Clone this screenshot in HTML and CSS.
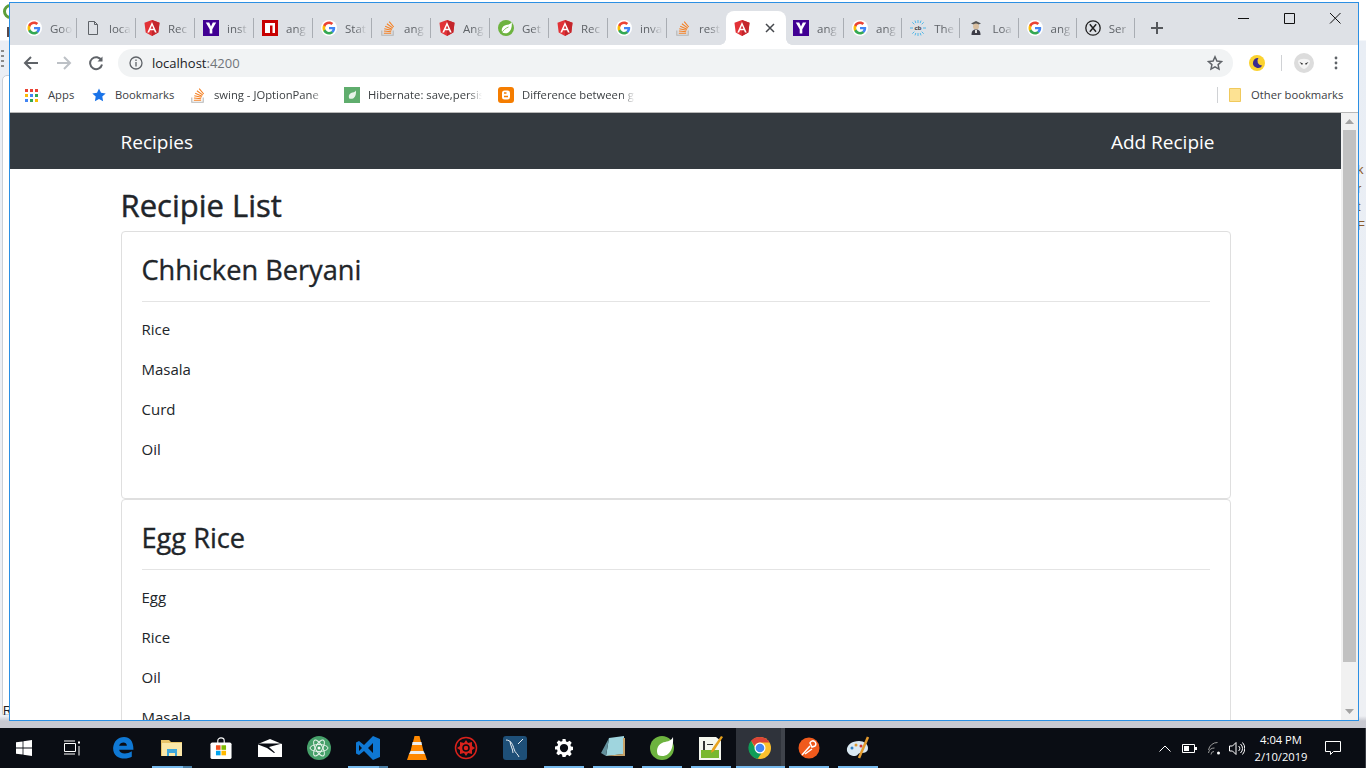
FILE: index.html
```html
<!DOCTYPE html>
<html lang="en">
<head>
<meta charset="utf-8">
<title>localhost:4200</title>
<link rel="stylesheet" href="styles.css">
</head>
<body>
<svg class="defs" width="0" height="0" aria-hidden="true">
  <symbol id="g" viewBox="0 0 16 16"><circle cx="8" cy="8" r="8" fill="#fff"/><path d="M14.2 8.2c0-.5 0-.9-.1-1.300H8v2.400h3.500c-.2.800-.6 1.400-1.300 1.900v1.500h2.100c1.200-1.100 1.900-2.700 1.900-4.500z" fill="#4285f4"/><path d="M8 14.400c1.700 0 3.200-.6 4.300-1.500l-2.100-1.600c-.6.400-1.300.6-2.200.6-1.700 0-3.100-1.100-3.600-2.600H2.200v1.600C3.300 13 5.500 14.400 8 14.400z" fill="#34a853"/><path d="M4.400 9.300c-.3-.8-.3-1.800 0-2.600V5.100H2.200c-.9 1.800-.9 4 0 5.800z" fill="#fbbc05"/><path d="M8 4.100c.9 0 1.800.3 2.400.9l1.900-1.900C11.200 2.200 9.700 1.600 8 1.600 5.500 1.600 3.300 3 2.200 5.100l2.200 1.600C4.900 5.200 6.300 4.100 8 4.100z" fill="#ea4335"/></symbol>
  <symbol id="doc" viewBox="0 0 16 16"><path d="M3.500 1.500h6l3 3v10h-9z M9.500 1.500v3h3" fill="none" stroke="#5f6368"/></symbol>
  <symbol id="ng" viewBox="0 0 16 16"><path d="M8 0 .5 2.700l1.200 9.900L8 16l6.300-3.400 1.200-9.900z" fill="#e23237"/><path d="M8 0v16l6.300-3.400 1.200-9.900z" fill="#c4262c"/><path d="M8 2 3.300 12.500h1.800l.9-2.300h4l.9 2.300h1.800zm1.400 6.700H6.600L8 5.400z" fill="#fff"/></symbol>
  <symbol id="yh" viewBox="0 0 16 16"><path d="M0 0h16v16H0z" fill="#410093"/><path d="M2.800 2.500h3.400L8 6.500l1.800-4h3.400L9.300 9.300v4.200H6.700V9.300z" fill="#fff"/></symbol>
  <symbol id="npm" viewBox="0 0 16 16"><path d="M0 0h16v16H0z" fill="#c80000"/><path d="M3 3h10v10h-2.500V5.500H8V13H3z" fill="#fff"/></symbol>
  <symbol id="so" viewBox="0 0 16 16"><path d="M1.800 10.500v4.700h11.400v-4.700" fill="none" stroke="#b5b5b5" stroke-width="1.100"/><path d="M3.800 13.200h7.400M3.900 11l7.300.7M4.300 8.700l7.200 1.600M5.200 6.200l6.900 3M6.900 3.800l6 4.300M9.200 1.600l4.500 5.400" fill="none" stroke="#f48024" stroke-width="1.100"/></symbol>
  <symbol id="sp" viewBox="0 0 16 16"><circle cx="8" cy="8" r="8" fill="#6db33f"/><path d="M13.800 2c-1.500 3-4.300 2.300-7 3.500-3 1.300-3.700 4.500-2.500 7 1.500 1 4 1.200 6 0 3-1.800 3.800-6 3.500-10.500z" fill="#fff"/><path d="M3.500 13.500C5 10 8 8 10.500 7" fill="none" stroke="#6db33f" stroke-width=".8"/></symbol>
  <symbol id="cb" viewBox="0 0 16 16"><g stroke="#52b8e8" stroke-width="1"><path d="M8 0v3M8 13v3M0 8h3M13 8h3M2.300 2.300l2 2M11.700 11.700l2 2M2.300 13.700l2-2M11.700 4.300l2-2M5 .6l.8 2.400M11 .6l-.8 2.400M5 15.400l.8-2.400M11 15.400l-.8-2.400"/></g><text x="8" y="10" class="cbt">cb</text></symbol>
  <symbol id="ld" viewBox="0 0 16 16"><path d="M3 3.500 8 1l5 2.500L8 5.500z" fill="#555"/><circle cx="8" cy="6.500" r="3" fill="#d9bfa0"/><path d="M3.500 15c0-4 1.500-5.500 4.500-5.500s4.500 1.500 4.500 5.500z" fill="#3c3c46"/><path d="M7 10h2v3H7z" fill="#ddd"/></symbol>
  <symbol id="xc" viewBox="0 0 16 16"><circle cx="8" cy="8" r="7.200" fill="none" stroke="#222" stroke-width="1.300"/><path d="M4.800 4.300 11 11.700M11.200 4.300 4.800 11.700" stroke="#222" stroke-width="1.500"/></symbol>
</svg>

<main class="desktop">
  <span class="peek peek-ball"></span>
  <span class="peek peek-bar"></span>
  <span class="peek peek-dots"></span>
  <span class="peek peek-box"></span>
  <span class="peek peek-r">R</span>
  <div class="peek peek-right"><span>k</span><span>r</span><span>t</span><span>F</span></div>

  <section class="window">
    <header class="tabstrip">
      <div class="tabs">
        <div class="tab"><svg class="fav"><use href="#g"/></svg><span class="tab-t">Goo</span></div>
        <div class="tab"><svg class="fav"><use href="#doc"/></svg><span class="tab-t">loca</span></div>
        <div class="tab"><svg class="fav"><use href="#ng"/></svg><span class="tab-t">Rec</span></div>
        <div class="tab"><svg class="fav"><use href="#yh"/></svg><span class="tab-t">inst</span></div>
        <div class="tab"><svg class="fav"><use href="#npm"/></svg><span class="tab-t">ang</span></div>
        <div class="tab"><svg class="fav"><use href="#g"/></svg><span class="tab-t">Stat</span></div>
        <div class="tab"><svg class="fav"><use href="#so"/></svg><span class="tab-t">ang</span></div>
        <div class="tab"><svg class="fav"><use href="#ng"/></svg><span class="tab-t">Ang</span></div>
        <div class="tab"><svg class="fav"><use href="#sp"/></svg><span class="tab-t">Get</span></div>
        <div class="tab"><svg class="fav"><use href="#ng"/></svg><span class="tab-t">Rec</span></div>
        <div class="tab"><svg class="fav"><use href="#g"/></svg><span class="tab-t">inva</span></div>
        <div class="tab tab-pre"><svg class="fav"><use href="#so"/></svg><span class="tab-t">rest</span></div>
        <div class="tab tab-active"><svg class="fav"><use href="#ng"/></svg>
          <svg class="tab-x" viewBox="0 0 10 10"><path d="M1 1l8 8M9 1l-8 8"/></svg></div>
        <div class="tab"><svg class="fav"><use href="#yh"/></svg><span class="tab-t">ang</span></div>
        <div class="tab"><svg class="fav"><use href="#g"/></svg><span class="tab-t">ang</span></div>
        <div class="tab"><svg class="fav"><use href="#cb"/></svg><span class="tab-t">The</span></div>
        <div class="tab"><svg class="fav"><use href="#ld"/></svg><span class="tab-t">Loa</span></div>
        <div class="tab"><svg class="fav"><use href="#g"/></svg><span class="tab-t">ang</span></div>
        <div class="tab"><svg class="fav"><use href="#xc"/></svg><span class="tab-t">Ser</span></div>
      </div>
      <svg class="newtab" viewBox="0 0 12 12"><path d="M6 0v12M0 6h12"/></svg>
      <div class="winctl">
        <svg class="wc" viewBox="0 0 46 30"><path d="M18 15.500h11"/></svg>
        <svg class="wc" viewBox="0 0 46 30"><path d="M18.500 10.500h10v10h-10z"/></svg>
        <svg class="wc" viewBox="0 0 46 30"><path d="M18 10l10.500 10.500M28.500 10 18 20.500"/></svg>
      </div>
    </header>

    <nav class="toolbar">
      <svg class="tb tb-back" viewBox="0 0 16 16"><path d="M15 8H2.500M8 2 2 8l6 6"/></svg>
      <svg class="tb tb-fwd" viewBox="0 0 16 16"><path d="M1 8h12.500M8 2l6 6-6 6"/></svg>
      <svg class="tb tb-rel" viewBox="0 0 16 16"><path d="M13.500 5.500A6 6 0 1 0 14 9.500"/><path class="fill" d="M14.500 1.500v5h-5z"/></svg>
      <div class="omni">
        <svg class="info" viewBox="0 0 14 14"><circle cx="7" cy="7" r="6"/><path d="M7 6v4.500M7 3.500v1.500"/></svg>
        <span class="url">localhost<span class="port">:4200</span></span>
        <svg class="ostar" viewBox="0 0 16 16"><path d="M8 1.800l1.900 4.200 4.600.5-3.400 3.100.9 4.500-4-2.300-4 2.300.9-4.500L1.500 6.500 6.100 6z"/></svg>
      </div>
      <svg class="ext" viewBox="0 0 16 16"><circle cx="8" cy="8" r="8" fill="#fbd22f"/><path d="M9.500 3a5 5 0 1 0 3.800 7.500A4.500 4.500 0 0 1 9.500 3z" fill="#3b2a90"/></svg>
      <span class="tb-sep"></span>
      <svg class="avatar" viewBox="0 0 20 20"><circle cx="10" cy="10" r="10" fill="#dcdcdc"/><path d="M4 8c2-3 10-3 12 0 0 4-4 8-6 8s-6-4-6-8z" fill="#f4f4f4"/><path d="M5.500 9l3.500 1.500-1 1.500zM14.500 9 11 10.500l1 1.500z" fill="#333"/></svg>
      <svg class="dots" viewBox="0 0 4 14"><circle cx="2" cy="2" r="1.400"/><circle cx="2" cy="7" r="1.400"/><circle cx="2" cy="12" r="1.400"/></svg>
    </nav>

    <div class="bookmarks">
      <svg class="bm-apps" viewBox="0 0 13 13"><g><path fill="#ea4335" d="M0 0h3v3H0zM5 0h3v3H5zM10 0h3v3h-3z"/><path fill="#fbbc05" d="M0 5h3v3H0z"/><path fill="#4285f4" d="M5 5h3v3H5zM0 10h3v3H0z"/><path fill="#34a853" d="M10 5h3v3h-3zM5 10h3v3H5z"/><path fill="#fbbc05" d="M10 10h3v3h-3z"/></g></svg>
      <span class="bm bm-a">Apps</span>
      <svg class="bm-star" viewBox="0 0 14 14"><path fill="#1a73e8" d="M7 .5l2 4.300 4.700.6-3.400 3.200.8 4.700L7 11l-4.100 2.300.8-4.700L.3 5.400 5 4.800z"/></svg>
      <span class="bm bm-b">Bookmarks</span>
      <svg class="fav bm-so"><use href="#so"/></svg>
      <span class="bm bm-f bm-c">swing - JOptionPane</span>
      <svg class="fav bm-leaf" viewBox="0 0 16 16"><path d="M0 0h16v16H0z" fill="#5fad6d"/><path d="M12 3.500c-1 2-3 1.500-5 2.500-2.500 1.300-2.500 3.700-1.800 5.500 1 .5 3 .5 4.300-.3 2.200-1.500 2.700-4.700 2.500-7.700z" fill="#e6f3e8"/></svg>
      <span class="bm bm-f bm-d">Hibernate: save,persis</span>
      <svg class="fav bm-blog" viewBox="0 0 16 16"><rect width="16" height="16" rx="3" fill="#f57d00"/><rect x="4" y="3.500" width="8" height="9" rx="2.500" fill="#fff"/><path d="M6 6h2.500M6 9.500h4" stroke="#f57d00" stroke-width="1.300"/></svg>
      <span class="bm bm-f bm-e">Difference between g</span>
      <span class="bm-sep"></span>
      <svg class="bm-folder" viewBox="0 0 12 14"><path d="M.5.500h11v13H.5z" fill="#fde293" stroke="#f0c95c"/></svg>
      <span class="bm bm-o">Other bookmarks</span>
    </div>

    <div class="viewport">
      <div class="page">
        <div class="navbar">
          <div class="container nav-inner">
            <a class="brand">Recipies</a>
            <a class="nav-link">Add Recipie</a>
          </div>
        </div>
        <div class="container">
          <h2 class="heading">Recipie List</h2>
          <article class="card">
            <h3 class="card-title">Chhicken Beryani</h3>
            <hr class="rule">
            <p>Rice</p><p>Masala</p><p>Curd</p><p>Oil</p>
          </article>
          <article class="card">
            <h3 class="card-title">Egg Rice</h3>
            <hr class="rule">
            <p>Egg</p><p>Rice</p><p>Oil</p><p>Masala</p>
          </article>
        </div>
      </div>
      <div class="scrollbar">
        <svg class="sb-arrow" viewBox="0 0 9 5"><path d="M4.500 0 9 5H0z"/></svg>
        <div class="sb-track"><div class="sb-thumb"></div></div>
        <svg class="sb-arrow" viewBox="0 0 9 5"><path d="M0 0h9L4.500 5z"/></svg>
      </div>
    </div>
  </section>
</main>

<footer class="taskbar">
  <div class="ti ti-s"><svg class="ic" viewBox="0 0 16 16"><path fill="#fff" d="M0 2.300 6.600 1.400v6.200H0zM7.400 1.300 16 0v7.600H7.400zM0 8.400h6.600v6.200L0 13.700zM7.400 8.400H16V16l-8.600-1.300z"/></svg></div>
  <div class="ti ti-s ti-view"><svg class="ic" viewBox="0 0 16 16"><path fill="none" stroke="#fff" d="M.5 3.500h11v8H.5zM0 1h11M0 14h11"/><path stroke="#fff" stroke-width="2" d="M14 2.500h2"/><path stroke="#fff" d="M15 6v9.500"/></svg></div>
  <div class="ti"><svg class="ic ic-l" viewBox="0 0 20 20"><path fill="#0f78d4" d="M1 10C1.500 4 5.500 0 11 0c5 0 8.500 3.500 8.500 11.500H6.500c.3 3.500 6 5 11.500 1.500v5c-5 2.800-17 3-17-8zm5.500-2h7C13.500 4 7.500 4 6.500 8z"/></svg></div>
  <div class="ti on stack"><svg class="ic ic-l" viewBox="0 0 22 20"><path fill="#e9c46a" d="M0 2h8l2 2h11v14H0z"/><path fill="#fbe7a8" d="M1 5h20v13H1z"/><path fill="#3fa7dc" d="M6 11h10v7h-2v-3H8v3H6z"/></svg></div>
  <div class="ti"><svg class="ic ic-l" viewBox="0 0 23 24"><path fill="none" stroke="#fff" stroke-width="1.200" d="M8 7V4c0-4 7-4 7 0v3"/><rect y="6" width="23" height="18" rx="2" fill="#fff"/><path fill="#f25022" d="M6 9h5v5H6z"/><path fill="#7fba00" d="M12 9h5v5h-5z"/><path fill="#00a4ef" d="M6 15h5v5H6z"/><path fill="#ffb900" d="M12 15h5v5h-5z"/></svg></div>
  <div class="ti"><svg class="ic ic-x" viewBox="0 0 24 18"><path fill="#fff" d="M0 5 12 0l12 5v13H0z"/><path fill="#0a0d14" d="M0 4.500h24L11 8l6 5.500-1 .5-7-5-9-3.500z"/></svg></div>
  <div class="ti"><svg class="ic ic-x" viewBox="0 0 24 24"><circle cx="12" cy="12" r="12" fill="#46a06a"/><g fill="none" stroke="#e6f3ea"><ellipse cx="12" cy="12" rx="9" ry="3.500"/><ellipse cx="12" cy="12" rx="9" ry="3.500" transform="rotate(60 12 12)"/><ellipse cx="12" cy="12" rx="9" ry="3.500" transform="rotate(120 12 12)"/></g><circle cx="12" cy="12" r="1.500" fill="#fff"/></svg></div>
  <div class="ti on stack"><svg class="ic ic-x" viewBox="0 0 24 24"><path fill="#0f78d4" d="M17 0l7 3v18l-7 3-9-9-5 4-3-1.500v-11L3 5l5 4zM17 7l-5 5 5 5zM3 9v6l3-3z"/></svg></div>
  <div class="ti"><svg class="ic ic-x" viewBox="0 0 20 24"><path fill="#ff8800" d="M7.500 0h5l1.500 6h-8zM5 9h10l1.500 6h-13zM0 24l2-6h16l2 6z"/><path fill="#eee" d="M5.500 6h9L15 9H5zM3.500 15h13l1.500 3H2z"/></svg></div>
  <div class="ti"><svg class="ic ic-x" viewBox="0 0 24 24"><circle cx="12" cy="12" r="10.500" fill="none" stroke="#d9221c" stroke-width="1.500"/><path fill="#d9221c" d="M12 4l2 3 4-1 0 4 3 2-3 2 0 4-4-1-2 3-2-3-4 1 0-4-3-2 3-2 0-4 4 1z"/><circle cx="12" cy="12" r="3" fill="none" stroke="#0a0d14" stroke-width="1.500"/></svg></div>
  <div class="ti"><svg class="ic ic-x" viewBox="0 0 24 24"><rect width="24" height="24" rx="3" fill="#1e4f78"/><path fill="none" stroke="#e8eef3" d="M3 4c5 0 7 5 8 9s4 5 5 8M7 5c0 4 3 8 3 12M15 8l5-5"/></svg></div>
  <div class="ti on"><svg class="ic ic-g" viewBox="0 0 24 24"><path fill="#fff" d="M10 0h4l.7 3.300 2 .8 2.800-1.800 2.800 2.800-1.800 2.800.8 2 3.300.7v4l-3.300.7-.8 2 1.800 2.800-2.800 2.800-2.800-1.800-2 .8L14 24h-4l-.7-3.300-2-.8-2.800 1.800-2.800-2.800 1.800-2.800-.8-2L0 14v-4l3.300-.7.8-2L2.300 4.500l2.800-2.800 2.800 1.800 2-.8zm2 6.500a5.500 5.500 0 1 0 0 11 5.500 5.500 0 0 0 0-11z"/></svg></div>
  <div class="ti on"><svg class="ic ic-x" viewBox="0 0 24 24"><path fill="#9fd5de" d="M8 2l15-2v18L5 20z"/><path fill="#63909c" d="M8 2 0 17l5 3z"/><path fill="#c8a36a" d="M22 2h2v18H5l17-2z"/></svg></div>
  <div class="ti on"><svg class="ic ic-x" viewBox="0 0 24 24"><circle cx="12" cy="12" r="12" fill="#6db33f"/><path fill="#fff" d="M23 1c-2 5-7 4-11 6-5 2.500-6 8-4 12 2.500 1.500 7 1.500 10-1 4.500-3.500 5.500-11 5-17z"/></svg></div>
  <div class="ti on"><svg class="ic ic-x" viewBox="0 0 24 24"><path fill="#f4f6ee" d="M0 1h17l5 4v19H0z"/><path fill="#79b82e" d="M2 14h18v8H2z"/><path fill="#333" d="M4 5h2v9H4zM8 8h6v1H8z"/><path fill="#e8a21c" d="M22 0l2 1-9 14-3 2 1-4z"/></svg></div>
  <div class="ti ti-chrome on"><svg class="ic ic-x" viewBox="0 0 24 24"><circle cx="12" cy="12" r="11" fill="#fbc02d"/><path fill="#db4437" d="M12 1a11 11 0 0 1 9.500 5.500H12a5.500 5.500 0 0 0-5.200 3.700L3 4.800A11 11 0 0 1 12 1z"/><path fill="#0f9d58" d="M3 4.800l5 8.700a5 5 0 0 0 5.500 3.800L9.600 22.700A11 11 0 0 1 3 4.800z"/><circle cx="12" cy="12" r="5.500" fill="#fff"/><circle cx="12" cy="12" r="4.300" fill="#4285f4"/></svg></div>
  <div class="ti on"><svg class="ic ic-x" viewBox="0 0 24 24"><circle cx="12" cy="12" r="10.500" fill="#f05a1c"/><path fill="none" stroke="#fff" stroke-width="1.500" d="M5 19l8-9M8 18l7-5M13 7a3 3 0 1 1 5 3l-3 1z"/></svg></div>
  <div class="ti on"><svg class="ic ic-x" viewBox="0 0 24 24"><path fill="#d9e8f2" d="M1 15C0 9 6 5 13 5c5 0 9 3 9 7 0 5-5 5-8 5-2 0-2 3-5 3-4 0-7-2-8-5z"/><circle cx="6" cy="12" r="1.500" fill="#2f7fc2"/><circle cx="10" cy="9" r="1.500" fill="#d93"/><circle cx="15" cy="10" r="1.500" fill="#c33"/><path stroke="#e39a2d" stroke-width="2.500" d="M13 22 22 1"/></svg></div>
  <div class="tray">
    <svg class="tr tr-chev" viewBox="0 0 12 7"><path d="M.5 6.500 6 1l5.500 5.500"/></svg>
    <svg class="tr tr-bat" viewBox="0 0 15 9"><path d="M.5.500h12v8H.5z"/><path class="fill" d="M2 2h5v5H2zM13 3h2v3h-2z"/></svg>
    <svg class="tr tr-wifi" viewBox="0 0 14 13"><path class="dim" d="M.5 8a9 9 0 0 1 9-7.500M.5 11a6 6 0 0 1 6-5M3 12.500a3 3 0 0 1 3-3"/><circle class="fill" cx="10.500" cy="11" r="1.500"/></svg>
    <svg class="tr tr-vol" viewBox="0 0 16 13"><path d="M.5 4h3l3.500-3.500v12L3.500 9h-3zM9.500 4a3 3 0 0 1 0 5M11.500 2a6 6 0 0 1 0 9M13.500.5a9 9 0 0 1 0 12"/></svg>
    <div class="clock"><span>4:04 PM</span><span>2/10/2019</span></div>
    <svg class="tr tr-note" viewBox="0 0 16 15"><path d="M.5.500h15v10H8.500l-3 3v-3h-5z"/></svg>
  </div>
</footer>
</body>
</html>
```

FILE: styles.css
```css
* { box-sizing: border-box; }
html, body { margin: 0; height: 100%; }
body {
  width: 1366px; height: 768px; overflow: hidden;
  display: flex; flex-direction: column;
  font-family: "Open Sans", "Noto Sans", "Liberation Sans", sans-serif;
  background: #fff;
}
.defs { position: absolute; }
.cbt { font: bold 6px "Liberation Sans", sans-serif; text-anchor: middle; fill: #333; }

/* desktop behind the window */
.desktop {
  flex: 1; position: relative; overflow: hidden;
  background: linear-gradient(to bottom, #fff 0, #fff 40px, #e9eef5 41px, #eef0f4 716px, #c8c9d1 721px);
}
.peek { position: absolute; }
.peek-ball { left: 3px; top: 4px; width: 15px; height: 15px; border: 3px solid #5f9e3a; border-radius: 50%; }
.peek-bar { left: 7px; top: 27px; width: 2px; height: 10px; background: #5a4a4a; }
.peek-dots {
  left: 1px; top: 50px; width: 3px; height: 18px;
  background: repeating-linear-gradient(to bottom, #8a8a8a 0, #8a8a8a 2px, transparent 2px, transparent 5px);
}
.peek-box { left: 2px; top: 75px; width: 20px; height: 640px; background: #fff; border: 1px solid #c9ced6; border-radius: 5px 0 0 0; }
.peek-r { left: 3px; top: 704px; font: 12px "Liberation Sans", sans-serif; color: #222; }
.peek-right {
  left: 1357px; top: 161px; width: 9px; overflow: hidden;
  display: flex; flex-direction: column;
  font: 13px/18.700px "Liberation Sans", sans-serif; color: #8a5a2b;
}

.window {
  position: absolute; left: 9px; top: 2px; width: 1350px; height: 719px;
  border: 1px solid #2b8fe3; background: #fff;
  display: flex; flex-direction: column; overflow: hidden;
}

/* tab strip */
.tabstrip { height: 42px; flex: none; background: #dee1e6; display: flex; align-items: flex-end; padding-left: 8px; position: relative; }
.tabs { display: flex; height: 34px; }
.tab {
  width: 59px; height: 34px; flex: none; position: relative;
  display: flex; align-items: center; padding: 0 0 0 8px;
}
.tab:nth-child(n+15) { width: 58.200px; }
.tab::after { content: ""; position: absolute; right: 0; top: 7px; height: 20px; width: 1px; background: #a9adb3; }
.tab-pre::after { display: none; }
.tab-active { background: #fff; border-radius: 8px 8px 0 0; width: 60px; margin-right: -1px; z-index: 1; }
.tab-active::before, .tab-active::after {
  content: ""; position: absolute; top: auto; bottom: 0; width: 6px; height: 6px;
}
.tab-active::before { left: -6px; right: auto; background: radial-gradient(circle at 0 0, #dee1e6 5.500px, #fff 6px); }
.tab-active::after { right: -6px; background: radial-gradient(circle at 100% 0, #dee1e6 5.500px, #fff 6px); }
.fav { width: 16px; height: 16px; flex: none; }
.tab-t {
  margin-left: 8px; white-space: nowrap;
  font-size: 11.500px; color: #5f6368; flex: none;
  -webkit-mask-image: linear-gradient(to right, #000 10px, rgba(0,0,0,.15) 20px);
  mask-image: linear-gradient(to right, #000 10px, rgba(0,0,0,.15) 20px);
}
.tab-x { width: 10px; height: 10px; margin-left: 15px; fill: none; stroke: #45484d; stroke-width: 1.500; flex: none; }
.newtab { width: 12px; height: 12px; margin: 0 0 11px 16px; fill: none; stroke: #55585c; stroke-width: 2; flex: none; }
.winctl { margin-left: auto; align-self: flex-start; display: flex; margin-top: 0; }
.wc { width: 46px; height: 30px; fill: none; stroke: #111; stroke-width: 1; }

/* toolbar */
.toolbar { height: 36px; flex: none; display: flex; align-items: center; background: #fff; }
.tb { width: 16px; height: 16px; fill: none; stroke: #5f6368; stroke-width: 2; flex: none; }
.tb-back { margin-left: 13px; }
.tb-fwd { margin-left: 17px; stroke: #bdc1c6; }
.tb-rel { margin-left: 16px; }
.tb-rel .fill { fill: #5f6368; stroke: none; }
.omni {
  margin-left: 14px; width: 1115px; height: 28px; border-radius: 14px; background: #f1f3f4;
  display: flex; align-items: center; padding-left: 11px; flex: none;
}
.info { width: 14px; height: 14px; fill: none; stroke: #5f6368; stroke-width: 1.300; flex: none; }
.url { margin-left: 9px; font-size: 13px; color: #202124; }
.port { color: #70757a; }
.ostar { width: 16px; height: 16px; margin-left: auto; margin-right: 10px; fill: none; stroke: #5f6368; stroke-width: 1.500; }
.ext { width: 16px; height: 16px; margin-left: 16px; flex: none; }
.tb-sep { width: 1px; height: 16px; background: #d0d2d5; margin-left: 16px; flex: none; }
.avatar { width: 20px; height: 20px; margin-left: 12px; flex: none; }
.dots { width: 4px; height: 14px; margin-left: 20px; fill: #5f6368; flex: none; }

/* bookmarks */
.bookmarks {
  height: 32px; flex: none; display: flex; align-items: center; background: #fff;
  border-bottom: 1px solid #b8b8b8; padding-bottom: 3px; white-space: nowrap;
}
.bm { font-size: 11.250px; color: #3c4043; flex: none; margin-bottom: 2px; }
.bm-f {
  -webkit-mask-image: linear-gradient(to right, #000 88%, transparent 100%);
  mask-image: linear-gradient(to right, #000 88%, transparent 100%);
}
.bm-apps { width: 13px; height: 13px; margin-left: 15px; flex: none; }
.bm-a { margin-left: 10px; width: 29px; }
.bm-star { width: 14px; height: 14px; margin-left: 15px; flex: none; }
.bm-b { margin-left: 9px; width: 60px; }
.bm-so { margin-left: 15px; }
.bm-c { margin-left: 8px; width: 110px; }
.bm-leaf { margin-left: 20px; }
.bm-d { margin-left: 8px; width: 114px; }
.bm-blog { margin-left: 16px; }
.bm-e { margin-left: 8px; width: 113px; }
.bm-sep { width: 1px; height: 16px; background: #d0d2d5; margin-left: auto; flex: none; }
.bm-folder { width: 12px; height: 14px; margin-left: 11px; flex: none; }
.bm-o { margin-left: 10px; margin-right: 14px; width: 93px; }

/* page */
.viewport { flex: 1; min-height: 0; display: flex; }
.page { flex: 1; min-width: 0; overflow: hidden; color: #212529; }
.scrollbar { width: 17px; flex: none; background: #f1f1f1; display: flex; flex-direction: column; align-items: center; }
.sb-arrow { width: 9px; height: 5px; fill: #a3a3a3; margin: 6px 0; flex: none; }
.sb-track { flex: 1; width: 100%; padding: 0 2px; }
.sb-thumb { height: 532px; background: #c1c1c1; }
.container { width: 1140px; margin: 0 auto; padding: 0 15px; }
.navbar { height: 56px; background: #343a40; display: flex; align-items: center; padding-top: 1px; }
.nav-inner { display: flex; justify-content: space-between; color: #fff; font-size: 19px; line-height: 30px; }
.brand { color: #fff; }
.nav-link { color: #fff; padding-right: 16px; }
.heading { margin: 17px 0 7px; font-size: 31px; line-height: 38px; font-weight: 400; -webkit-text-stroke: .45px #212529; }
.card { border: 1px solid #dfdfdf; border-radius: 4px; padding: 20px; }
.card-title { margin: 0; padding-top: 3px; font-size: 27.200px; line-height: 30px; font-weight: 400; -webkit-text-stroke: .35px #212529; }
.rule { margin: 16px 0; height: 1px; border: 0; background: #e4e4e4; }
.card p { margin: 0 0 17px; font-size: 15px; line-height: 23px; }

/* taskbar */
.taskbar { height: 40px; flex: none; background: #0a0d14; display: flex; color: #fff; position: relative; }
.ti { width: 49px; height: 40px; display: flex; align-items: center; justify-content: center; position: relative; flex: none; }
.ti-s { width: 48px; }
.ti-view { width: 50.500px; padding-right: 2.500px; }
.ti.on::after { content: ""; position: absolute; left: 4.500px; right: 4.500px; bottom: 0; height: 2px; background: #76b9ed; }
.ti.stack::after { background: linear-gradient(to right, #76b9ed 78%, #4a7ea5 78%); }
.ti-chrome { background: linear-gradient(to right, #2f333b 91%, #3f434b 91%); }
.ti-chrome.on::after { left: 0; right: 0; }
.ic { width: 16px; height: 16px; }
.ic-l { width: 22px; height: 22px; }
.ic-x { width: 24px; height: 24px; }
.ic-g { width: 18px; height: 18px; }
.tray { margin-left: auto; display: flex; align-items: center; padding-right: 24px; border-right: 1px solid #3a3d44; }
.tr { fill: none; stroke: #fff; stroke-width: 1; flex: none; }
.tr .fill { fill: #fff; stroke: none; }
.tr .dim { stroke: #9a9a9a; }
.tr-chev { width: 12px; height: 7px; }
.tr-bat { width: 15px; height: 9px; margin-left: 11px; }
.tr-wifi { width: 14px; height: 13px; margin-left: 11px; }
.tr-vol { width: 16px; height: 13px; margin-left: 7px; }
.clock { display: flex; flex-direction: column; align-items: center; width: 60px; margin-left: 6px; font-size: 11.200px; line-height: 17px; }
.tr-note { width: 16px; height: 15px; margin-left: 14px; }
```
